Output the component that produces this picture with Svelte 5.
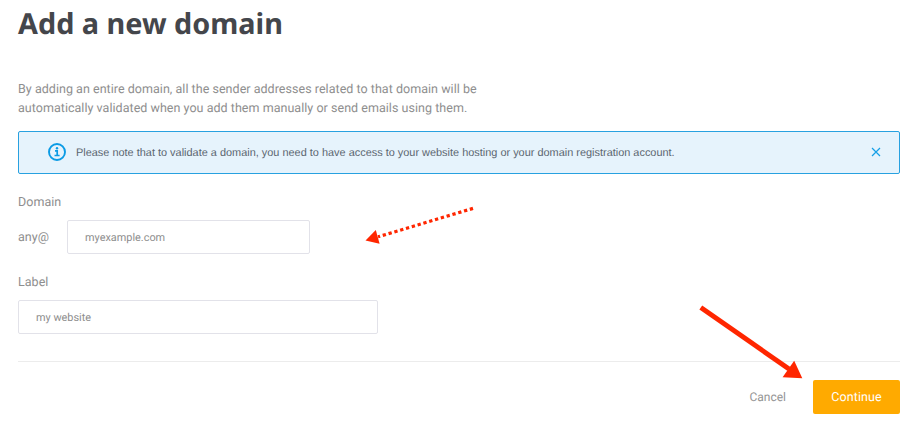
<script lang="ts">
  let domain = $state('myexample.com');
  let label = $state('my website');
  let showNotice = $state(true);
</script>

<main class="page">
  <h1>Add a new domain</h1>

  <p class="intro">
    By adding an entire domain, all the sender addresses related to that domain will be
    <br />automatically validated when you add them manually or send emails using them.
  </p>

  {#if showNotice}
    <div class="notice" role="status">
      <svg class="info" viewBox="0 0 18 18" aria-hidden="true">
        <circle cx="9" cy="9" r="8" fill="none" stroke="currentColor" stroke-width="1.9" />
        <circle cx="9" cy="5.2" r="1.2" fill="currentColor" />
        <path d="M7 7.8h2.2v4.6M6.5 12.5h5.1" fill="none" stroke="currentColor" stroke-width="1.7" />
      </svg>
      <span class="notice-text">Please note that to validate a domain, you need to have access to your website hosting or your domain registration account.</span>
      <button class="close" aria-label="Close" onclick={() => (showNotice = false)}>
        <svg viewBox="0 0 10 10" aria-hidden="true">
          <path d="M1 1l8 8M9 1l-8 8" fill="none" stroke="currentColor" stroke-width="1.2" />
        </svg>
      </button>
    </div>
  {/if}

  <form onsubmit={(e) => e.preventDefault()}>
    <label class="field-label" for="domain">Domain</label>
    <div class="domain-row">
      <span class="prefix">any@</span>
      <input id="domain" class="domain" type="text" bind:value={domain} />
    </div>

    <label class="field-label second" for="label">Label</label>
    <input id="label" class="label-input" type="text" bind:value={label} />

    <div class="actions">
      <button type="button" class="cancel">Cancel</button>
      <button type="submit" class="continue">Continue</button>
    </div>
  </form>

  <!-- Pointers to the domain field and the continue button -->
  <svg class="pointers" viewBox="0 0 917 423" aria-hidden="true">
    <path d="M473 208.4L378 236.8" fill="none" stroke="#ff2600" stroke-width="3.2" stroke-dasharray="3.3 2.76" />
    <path d="M365.5 240.5L375.8 230L379.6 243.8Z" fill="#ff2600" />
    <path d="M700.8 307.5L789 369" fill="none" stroke="#ff2600" stroke-width="5" />
    <path d="M802.3 378.3L794.2 360.8L782.6 377.2Z" fill="#ff2600" />
  </svg>
</main>

<style>
  :global(body) { background: #fff; }

  .page {
    position: relative;
    box-sizing: border-box;
    height: 423px;
    padding: 4px 17px 0 18px;
    overflow: hidden;
    font-family: Roboto, "Liberation Sans", sans-serif;
    font-size: 12.5px;
    letter-spacing: 0.035px;
    color: #8e8e8e;
    text-rendering: geometricPrecision;
  }

  h1 {
    margin: 0;
    font: 700 28.8px/40px "Noto Sans", sans-serif;
    letter-spacing: 0;
    color: #44464b;
    white-space: nowrap;
  }

  .intro {
    margin: 36px 0 0;
    line-height: 19px;
    white-space: nowrap;
  }

  .notice {
    display: flex;
    align-items: center;
    box-sizing: border-box;
    height: 43px;
    margin-top: 13px;
    padding: 0 18px 0 29px;
    border: 1px solid #28a1e0;
    border-radius: 2px;
    background: #e6f3fc;
  }

  .info { width: 18px; height: 18px; margin: 0 10px 1px 0; color: #0b9be5; flex-shrink: 0; }
  .notice-text {
    font: 10.93px/16px "Liberation Sans", sans-serif;
    letter-spacing: 0;
    color: #5b6670;
    white-space: nowrap;
  }

  button { margin: 0; border: 0; background: none; font: inherit; text-rendering: inherit; cursor: pointer; }
  .close { display: flex; margin: 0 0 1px auto; padding: 0; color: #159fe6; }
  .close svg { width: 10px; height: 10px; }

  .field-label { display: block; margin-top: 19px; line-height: 19px; }

  .domain-row { display: flex; align-items: center; margin-top: 8px; }
  .prefix { width: 49px; }

  input {
    box-sizing: border-box;
    display: block;
    height: 34px;
    margin: 0;
    padding: 0 17px;
    border: 1px solid #e2e2e9;
    border-radius: 2px;
    outline: none;
    background: #fff;
    color: #8e8e8e;
    font: 10.9px Roboto, sans-serif;
    text-rendering: inherit;
  }
  .domain { width: 243px; }
  .label-input { width: 360px; margin-top: 8px; }

  .actions {
    display: flex;
    justify-content: flex-end;
    margin-top: 27px;
    padding-top: 18px;
    border-top: 1px solid #ececec;
  }
  .cancel { padding: 0; margin-right: 27px; color: #959595; font-size: 12px; }
  .continue {
    width: 87px;
    height: 34px;
    padding: 0;
    border-radius: 2px;
    background: #ffaa00;
    color: #fff;
    letter-spacing: 0.1px;
  }

  .pointers { position: absolute; top: 0; left: 0; width: 917px; height: 423px; pointer-events: none; }
</style>
